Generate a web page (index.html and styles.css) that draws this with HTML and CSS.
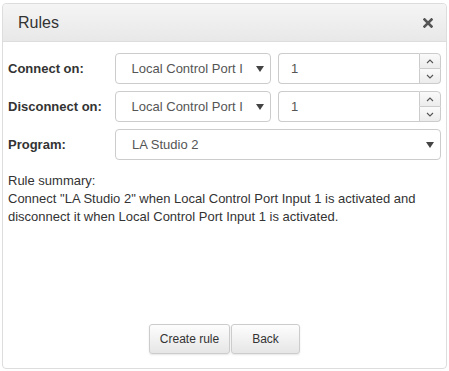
FILE: index.html
```html
<!DOCTYPE html>
<html lang="en">
<head>
    <meta charset="UTF-8">
    <title>Rules</title>
    <link rel="stylesheet" href="styles.css">
</head>
<body>
    <div class="panel">
        <div class="panel-header">
            <span class="panel-title">Rules</span>
            <svg class="close" width="10" height="10" viewBox="0 0 10 10">
                <path d="M1.5 1.5 L8.5 8.5 M8.5 1.5 L1.5 8.5" stroke="#555" stroke-width="2.6" stroke-linecap="square"/>
            </svg>
        </div>
        <div class="panel-body">
            <div class="form-row">
                <label class="field-label">Connect on:</label>
                <div class="select small">
                    <span class="select-text">Local Control Port I</span>
                    <svg class="caret" width="8" height="6" viewBox="0 0 8 6"><path d="M0 0 H8 L4 6 Z" fill="#444"/></svg>
                </div>
                <div class="number">
                    <input class="number-input" type="text" value="1">
                    <div class="spinner">
                        <span class="spin up"><svg width="8" height="5" viewBox="0 0 8 5"><path d="M1 4 L4 1 L7 4" fill="none" stroke="#555" stroke-width="1.1"/></svg></span>
                        <span class="spin down"><svg width="8" height="5" viewBox="0 0 8 5"><path d="M1 1 L4 4 L7 1" fill="none" stroke="#555" stroke-width="1.1"/></svg></span>
                    </div>
                </div>
            </div>
            <div class="form-row">
                <label class="field-label">Disconnect on:</label>
                <div class="select small">
                    <span class="select-text">Local Control Port I</span>
                    <svg class="caret" width="8" height="6" viewBox="0 0 8 6"><path d="M0 0 H8 L4 6 Z" fill="#444"/></svg>
                </div>
                <div class="number">
                    <input class="number-input" type="text" value="1">
                    <div class="spinner">
                        <span class="spin up"><svg width="8" height="5" viewBox="0 0 8 5"><path d="M1 4 L4 1 L7 4" fill="none" stroke="#555" stroke-width="1.1"/></svg></span>
                        <span class="spin down"><svg width="8" height="5" viewBox="0 0 8 5"><path d="M1 1 L4 4 L7 1" fill="none" stroke="#555" stroke-width="1.1"/></svg></span>
                    </div>
                </div>
            </div>
            <div class="form-row">
                <label class="field-label">Program:</label>
                <div class="select wide">
                    <span class="select-text">LA Studio 2</span>
                    <svg class="caret" width="8" height="6" viewBox="0 0 8 6"><path d="M0 0 H8 L4 6 Z" fill="#444"/></svg>
                </div>
            </div>

            <div class="summary">
                Rule summary:<br>
                Connect "LA Studio 2" when Local Control Port Input 1 is activated and disconnect it when Local Control Port Input 1 is activated.
            </div>
        </div>
        <div class="panel-footer">
            <button class="btn create">Create rule</button>
            <button class="btn back">Back</button>
        </div>
    </div>
</body>
</html>
```

FILE: styles.css
```css
body {
    margin: 0;
    font-family: "Liberation Sans", Arial, sans-serif;
    font-size: 13px;
    color: #333;
    background: #fff;
}

.panel {
    margin: 3px 0 0 2px;
    width: 443px;
    height: 364px;
    border: 1px solid #ddd;
    border-radius: 4px;
    display: flex;
    flex-direction: column;
}

.panel-header {
    height: 37px;
    display: flex;
    align-items: center;
    justify-content: space-between;
    padding: 0 13px 0 15px;
    background: linear-gradient(to bottom, #f5f5f5, #e8e8e8);
    border-bottom: 1px solid #ddd;
    border-radius: 4px 4px 0 0;
}

.panel-title {
    font-size: 16px;
    color: #333;
}

.close {
    display: block;
}

.panel-body {
    flex: 1;
    padding: 11px 5px 0 5px;
}

.form-row {
    display: flex;
    align-items: center;
    height: 31px;
    margin-bottom: 7px;
}

.field-label {
    width: 107px;
    font-weight: bold;
    color: #333;
}

.select {
    height: 31px;
    box-sizing: border-box;
    border: 1px solid #ccc;
    border-radius: 4px;
    display: flex;
    align-items: center;
    justify-content: space-between;
    padding: 0 6px 0 16px;
    color: #555;
    background: #fff;
}

.select.small {
    width: 157px;
}

.select.wide {
    width: 326px;
}

.caret {
    display: block;
}

.number {
    display: flex;
    margin-left: 7px;
    height: 31px;
}

.number-input {
    width: 141px;
    height: 31px;
    box-sizing: border-box;
    border: 1px solid #ccc;
    border-right: none;
    border-radius: 4px 0 0 4px;
    padding: 0 12px;
    font-family: inherit;
    font-size: 13px;
    color: #555;
    outline: none;
}

.spinner {
    width: 22px;
    display: flex;
    flex-direction: column;
}

.spin {
    flex: 1;
    display: flex;
    align-items: center;
    justify-content: center;
    border: 1px solid #ccc;
    background: linear-gradient(to bottom, #fafafa, #ececec);
    box-sizing: border-box;
}

.spin.up {
    border-radius: 0 4px 0 0;
}

.spin.down {
    border-top: none;
    border-radius: 0 0 4px 0;
}

.summary {
    margin-top: 12px;
    line-height: 18px;
    color: #333;
}

.panel-footer {
    display: flex;
    justify-content: center;
    gap: 1px;
    padding-bottom: 14px;
}

.btn {
    height: 30px;
    padding: 0;
    font-family: inherit;
    font-size: 12px;
    color: #333;
    border: 1px solid #ccc;
    border-radius: 3px;
    background: linear-gradient(to bottom, #fdfdfd, #e6e6e6);
    box-shadow: 0 1px 2px rgba(0,0,0,0.1);
}

.btn.create {
    width: 81px;
}

.btn.back {
    width: 69px;
}
```
